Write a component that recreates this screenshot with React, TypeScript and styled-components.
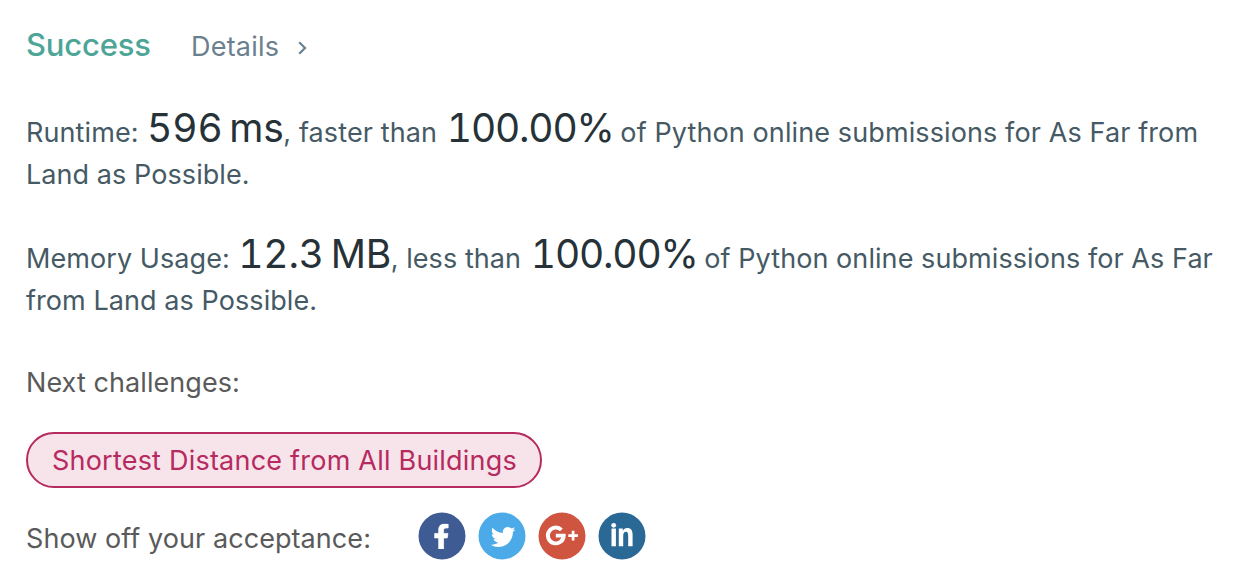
import React from "react";
import styled, { createGlobalStyle } from "styled-components";
import { FaFacebookF, FaTwitter } from "react-icons/fa";

const GlobalStyle = createGlobalStyle`
  * { box-sizing: border-box; }
  body { margin: 0; background: #fff; }
`;

const Page = styled.main`
  display: flex;
  flex-direction: column;
  align-items: flex-start;
  width: 1256px;
  height: 584px;
  padding: 24px 26px 0;
  overflow: hidden;
  font-family: Inter, sans-serif;
  font-size: 27px;
  line-height: 42px;
  letter-spacing: 0.07px;
  color: #455a64;
  white-space: nowrap;
`;

const Header = styled.header`
  display: flex;
  align-items: baseline;
  height: 42px;
`;

const Status = styled.h1`
  margin: 0;
  width: 165px;
  font-size: 31px;
  font-weight: 500;
  letter-spacing: -0.2px;
  color: #4da598;
`;

const Details = styled.a`
  color: #6b808e;
  letter-spacing: 0.2px;
`;

const Chevron = styled.svg`
  width: 9px;
  height: 14px;
  margin-left: 19px;
  align-self: center;
  margin-top: 6px;
`;

const Line = styled.p<{ $top?: number; $color?: string; $spacing?: number }>`
  margin: ${(p) => p.$top ?? 0}px 0 0;
  height: 42px;
  color: ${(p) => p.$color ?? "inherit"};
  letter-spacing: ${(p) => p.$spacing ?? 0.07}px;
`;

const Value = styled.span`
  margin: 0 -0.5px 0 0.7px;
  font-size: 39px;
  line-height: 0;
  font-feature-settings: "tnum";
  letter-spacing: -0.15px;
  word-spacing: -3.5px;
  color: #263238;
`;

const Percent = styled(Value)`
  margin: 0 -1px 0 2px;
  letter-spacing: -1.2px;
`;

const Challenge = styled.a`
  display: flex;
  align-items: center;
  justify-content: center;
  width: 516px;
  height: 56px;
  margin-top: 28px;
  padding: 2px 0 0 1px;
  border: 2px solid #b62a5f;
  border-radius: 28px;
  background: #f7e4ea;
  color: #b62a5f;
  letter-spacing: 0.22px;
`;

const ShareRow = styled.div`
  display: flex;
  align-items: center;
  height: 48px;
  margin-top: 24px;
`;

const ShareLabel = styled.span`
  width: 392px;
  padding-top: 5px;
  color: #5a5a5a;
`;

const Icons = styled.div`
  display: flex;
  gap: 12px;
`;

const Social = styled.a`
  width: 48px;
  height: 48px;
  color: #fff;
  > svg { display: block; }
`;

function Badge({ label, color, children }: { label: string; color: string; children: React.ReactNode }) {
  return (
    <Social aria-label={label}>
      <svg width="48" height="48" viewBox="0 0 48 48">
        <circle cx="24" cy="24" r="23.5" fill={color} />
        {children}
      </svg>
    </Social>
  );
}

export default function App() {
  return (
    <>
      <GlobalStyle />
      <Page>
        <Header>
          <Status>Success</Status>
          <Details>Details</Details>
          <Chevron viewBox="0 0 9 14" fill="none" stroke="#6b808e" strokeWidth="2.2">
            <path d="M1.2 1.2 7 7 1.2 12.8" />
          </Chevron>
        </Header>
        <Line $top={46} $spacing={0.11}>Runtime: <Value>596 ms</Value>, faster than <Percent>100.00%</Percent> of Python online submissions for As Far from</Line>
        <Line>Land as Possible.</Line>
        <Line $top={42}>Memory Usage: <Value>12.3 MB</Value>, less than <Percent>100.00%</Percent> of Python online submissions for As Far</Line>
        <Line>from Land as Possible.</Line>
        <Line $top={40} $color="#5a5a5a">Next challenges:</Line>
        <Challenge>Shortest Distance from All Buildings</Challenge>
        <ShareRow>
          <ShareLabel>Show off your acceptance:</ShareLabel>
          <Icons>
            <Badge label="Facebook" color="#3f5b94">
              <FaFacebookF x="10.8" y="11.8" size={25.2} strokeWidth={14} />
            </Badge>
            <Badge label="Twitter" color="#4baae7">
              <FaTwitter x="12.8" y="12.6" size={24.6} />
            </Badge>
            <Badge label="Google Plus" color="#cf5541">
              <g fill="none" stroke="currentColor">
                <path d="M23.4 17.9A7.9 7.9 0 1 0 25.7 23.6H17.8" strokeWidth="3.9" />
                <path d="M30.3 23.6h9.6M35.1 18.8v9.6" strokeWidth="2.7" />
              </g>
            </Badge>
            <Badge label="LinkedIn" color="#2a6896">
              <circle cx="15.7" cy="13.3" r="2.4" fill="currentColor" />
              <path
                fill="currentColor"
                d="M13.5 16.4h4.4v17.9h-4.4zM20.8 16.4h4v2.4c.9-1.7 2.3-2.8 4.4-2.8 3.9 0 5.4 2.5 5.4 6.8v11.5h-4.4V24c0-2.7-.6-4.2-2.3-4.2-2 0-2.7 1.6-2.7 4.2v10.3h-4.4z"
              />
            </Badge>
          </Icons>
        </ShareRow>
      </Page>
    </>
  );
}
